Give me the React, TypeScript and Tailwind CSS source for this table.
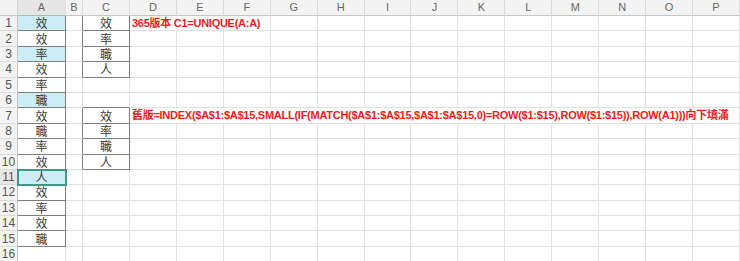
import React from 'react';

const COLS = ['A', 'B', 'C', 'D', 'E', 'F', 'G', 'H', 'I', 'J', 'K', 'L', 'M', 'N', 'O', 'P'];
const colA = ['效', '效', '率', '效', '率', '職', '效', '職', '率', '效', '人', '效', '率', '效', '職'];
const colC: Record<number, string> = { 1: '效', 2: '率', 3: '職', 4: '人', 7: '效', 8: '率', 9: '職', 10: '人' };
const blueRows = [1, 3, 6, 11];
const activeRow = 11;

const GRID = '#e1e1e1';
const DARK = '#7f7f7f';

// a cell has a box round it when it holds data in A or C
function boxed(row: number, col: number) {
  if (row < 1) return false;
  if (col === 0) return row <= 15;
  if (col === 2) return !!colC[row];
  return false;
}

function Cell({ row, col, span = 1, children }: { row: number; col: number; span?: number; children?: React.ReactNode }) {
  const lastCol = col + span - 1;
  const darkRight = boxed(row, lastCol) || boxed(row, lastCol + 1);
  const darkBottom = boxed(row, col) || boxed(row + 1, col);
  const blue = col === 0 && blueRows.includes(row);
  const active = col === 0 && row === activeRow;
  return (
    <div
      className={`relative flex items-center justify-center border-r border-b ${blue ? 'bg-[#cbeef6]' : ''} ${
        active ? 'z-10 outline-2 -outline-offset-1 outline-[#3a9a86]' : ''
      } ${children ? 'z-[5]' : ''}`}
      style={{
        gridColumn: span > 1 ? `span ${span} / span ${span}` : undefined,
        borderRightColor: darkRight ? DARK : GRID,
        borderBottomColor: darkBottom ? DARK : GRID,
      }}
    >
      {children}
    </div>
  );
}

function Note({ children }: { children: React.ReactNode }) {
  return (
    <span className="absolute left-[2px] whitespace-nowrap text-[11px] leading-none font-bold tracking-[-0.26px] text-[#f21c1c] [font-family:'Liberation_Sans','Noto_Sans_CJK_TC',sans-serif]">
      {children}
    </span>
  );
}

export default function App() {
  const rows = Array.from({ length: 16 }, (_, i) => i + 1);
  return (
    <div className="h-[261px] w-[740px] overflow-hidden bg-white [font-family:'Noto_Sans_CJK_TC',sans-serif]">
      <div className="grid grid-cols-[18px_48px_17px_repeat(14,minmax(0,1fr))] grid-rows-[16px_repeat(16,15.4px)]">
        {/* header */}
        <div className="border-r border-b border-r-[#d4d4d4] border-b-[#c6c6c6] bg-[#f3f3f3]" />
        {COLS.map((c, i) => (
          <div
            key={c}
            className={`flex items-center justify-center border-r border-b border-r-[#dcdcdc] text-[11px] leading-none text-[#666] [font-family:'Liberation_Sans',sans-serif] ${
              i === 0 ? 'border-b-[#9fbfb3] bg-[#e6e6e6]' : 'border-b-[#c6c6c6] bg-[#f3f3f3]'
            }`}
          >
            {c}
          </div>
        ))}

        {rows.map((r) => (
          <React.Fragment key={r}>
            <div
              className={`flex items-center justify-center border-r border-b border-b-[#dcdcdc] text-[12px] leading-none text-[#555] [font-family:'Liberation_Sans',sans-serif] ${
                r === activeRow ? 'border-r-[#9fbfb3] bg-[#e6e6e6]' : 'border-r-[#c6c6c6] bg-[#f3f3f3]'
              }`}
            >
              {r}
            </div>
            <Cell row={r} col={0}>
              <span className="text-[12px] leading-none text-[#3a3a3a]">{colA[r - 1] ?? ''}</span>
            </Cell>
            <Cell row={r} col={1} />
            <Cell row={r} col={2}>
              <span className="text-[12px] leading-none text-[#3a3a3a]">{colC[r] ?? ''}</span>
            </Cell>
            {r === 1 ? (
              <>
                <Cell row={r} col={3} span={3}>
                  <Note>365版本 C1=UNIQUE(A:A)</Note>
                </Cell>
                {COLS.slice(6).map((c, i) => (
                  <Cell key={c} row={r} col={6 + i} />
                ))}
              </>
            ) : r === 7 ? (
              <Cell row={r} col={3} span={13}>
                <Note>
                  舊版=INDEX($A$1:$A$15,SMALL(IF(MATCH($A$1:$A$15,$A$1:$A$15,0)=ROW($1:$15),ROW($1:$15)),ROW(A1)))向下填滿
                </Note>
              </Cell>
            ) : (
              COLS.slice(3).map((c, i) => <Cell key={c} row={r} col={3 + i} />)
            )}
          </React.Fragment>
        ))}
      </div>
    </div>
  );
}
